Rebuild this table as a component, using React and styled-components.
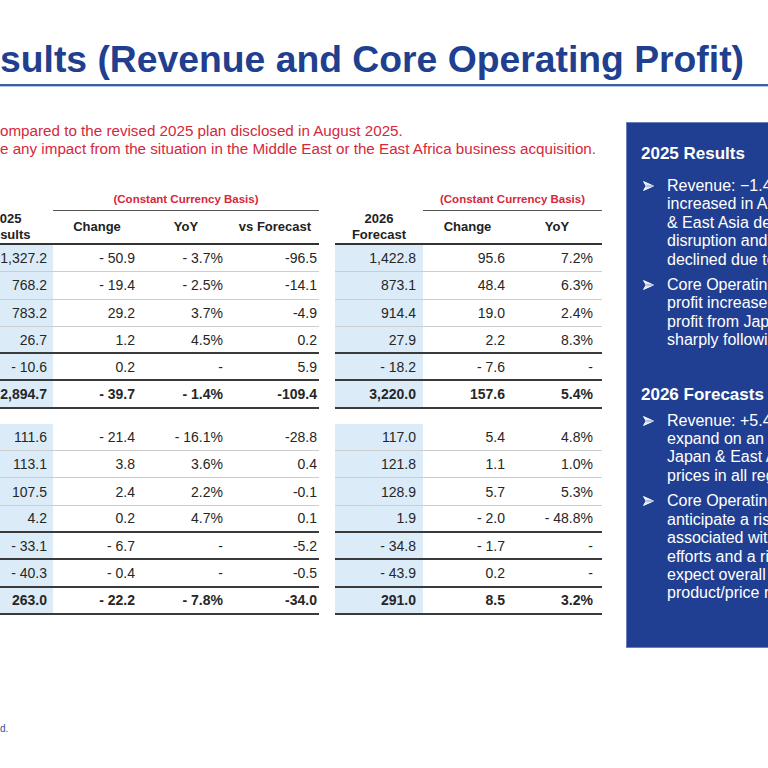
import React from 'react'
import styled, { createGlobalStyle } from 'styled-components'

const GlobalStyle = createGlobalStyle`
    html, body {
        margin: 0;
        padding: 0;
        background: #ffffff;
        overflow: hidden;
    }
    body {
        font-family: "Liberation Sans", Arial, sans-serif;
        color: #222222;
    }
`

const Page = styled.div`
    width: 768px;
    height: 768px;
    overflow: hidden;
    display: flex;
    flex-direction: column;
`

const Title = styled.h1`
    margin: 38px 0 0 0;
    font-size: 37.3px;
    line-height: 42px;
    font-weight: bold;
    color: #203f8f;
    white-space: nowrap;
`

const Rule = styled.div`
    margin-top: 4px;
    height: 2px;
    background: #3d5fa6;
    border-bottom: 1px solid #b4c3e0;
`

const Body = styled.div`
    display: flex;
    flex-direction: row;
    margin-top: 35px;
`

const LeftColumn = styled.div`
    flex: 0 0 626px;
    display: flex;
    flex-direction: column;
`

const Note = styled.div`
    font-size: 15.2px;
    line-height: 18px;
    color: #d5283b;
    white-space: nowrap;
`

const Tables = styled.div`
    display: flex;
    flex-direction: row;
    gap: 16px;
    margin-top: 31px;
    margin-left: ${props => props.offset}px;
`

const Block = styled.div`
    display: flex;
    flex-direction: column;
`

const CaptionRow = styled.div`
    display: flex;
    height: 22px;
    box-sizing: border-box;
`

const Caption = styled.div`
    flex: 1;
    text-align: center;
    font-size: 11.5px;
    line-height: 20px;
    font-weight: bold;
    color: #d5283b;
    border-bottom: 1.5px solid #555555;
`

const HeadRow = styled.div`
    display: flex;
    height: 34px;
    box-sizing: border-box;
    border-bottom: 2px solid #333333;
`

const HeadCell = styled.div`
    width: ${props => props.width}px;
    display: flex;
    align-items: center;
    justify-content: center;
    text-align: center;
    font-size: 13px;
    line-height: 16px;
    font-weight: bold;
    color: #222222;
`

const Row = styled.div`
    display: flex;
    height: 27.3px;
    box-sizing: border-box;
    border-bottom: ${props => props.line === 'dark' ? '2px solid #3a3a3a' : '1.5px solid #cdcdcd'};
`

const Cell = styled.div`
    width: ${props => props.width}px;
    box-sizing: border-box;
    padding-right: ${props => props.pad}px;
    display: flex;
    align-items: center;
    justify-content: flex-end;
    font-size: 14px;
    font-weight: ${props => props.bold ? 'bold' : 'normal'};
    color: #262626;
    background: ${props => props.shaded ? '#dbecf8' : 'transparent'};
    white-space: nowrap;
`

const Gap = styled.div`
    height: 15px;
`

const Panel = styled.div`
    flex: 0 0 260px;
    height: 526px;
    box-sizing: border-box;
    background: #213f92;
    border: 1px solid #6a80bd;
    padding: 20px 0 0 14px;
    color: #ffffff;
`

const PanelHeading = styled.div`
    font-size: 17px;
    line-height: 22px;
    font-weight: bold;
    white-space: nowrap;
    margin-top: ${props => props.top}px;
`

const BulletList = styled.div`
    display: flex;
    flex-direction: column;
    gap: 7px;
    margin-top: ${props => props.top}px;
`

const Bullet = styled.div`
    display: flex;
    flex-direction: row;
`

const Marker = styled.span`
    flex: 0 0 26px;
    height: 18.4px;
    display: flex;
    align-items: center;
    padding-left: 2px;
    box-sizing: border-box;
`

const BulletText = styled.div`
    font-size: 16px;
    line-height: 18.4px;
`

const Line = styled.div`
    white-space: nowrap;
`

const Footer = styled.div`
    margin-top: auto;
    padding-bottom: 33px;
    font-size: 10px;
    line-height: 12px;
    color: #3a4f96;
`

const Arrowhead = () => (
    <svg width="11" height="10" viewBox="0 0 11 10">
        <path d="M0.6 0.6 L10.4 5 L0.6 9.4 L3.2 5 Z" fill="#dfe5f3" stroke="#ffffff" strokeWidth="1" strokeLinejoin="round" />
        <path d="M3.2 5 L10.4 5" stroke="#8a9ccb" strokeWidth="1" />
    </svg>
)

const leftCols = [
    { width: 92, pad: 6 },
    { width: 88, pad: 6 },
    { width: 90, pad: 8 },
    { width: 88, pad: 2 },
]

const rightCols = [
    { width: 88, pad: 7 },
    { width: 89, pad: 7 },
    { width: 90, pad: 9 },
]

const leftTable = {
    head: [['2025', 'Results'], ['Change'], ['YoY'], ['vs Forecast']],
    blocks: [
        [
            { cells: ['1,327.2', '- 50.9', '- 3.7%', '-96.5'] },
            { cells: ['768.2', '- 19.4', '- 2.5%', '-14.1'] },
            { cells: ['783.2', '29.2', '3.7%', '-4.9'] },
            { cells: ['26.7', '1.2', '4.5%', '0.2'], line: 'dark' },
            { cells: ['- 10.6', '0.2', '-', '5.9'], line: 'dark' },
            { cells: ['2,894.7', '- 39.7', '- 1.4%', '-109.4'], line: 'dark', bold: true },
        ],
        [
            { cells: ['111.6', '- 21.4', '- 16.1%', '-28.8'] },
            { cells: ['113.1', '3.8', '3.6%', '0.4'] },
            { cells: ['107.5', '2.4', '2.2%', '-0.1'] },
            { cells: ['4.2', '0.2', '4.7%', '0.1'], line: 'dark' },
            { cells: ['- 33.1', '- 6.7', '-', '-5.2'], line: 'dark' },
            { cells: ['- 40.3', '- 0.4', '-', '-0.5'], line: 'dark' },
            { cells: ['263.0', '- 22.2', '- 7.8%', '-34.0'], line: 'dark', bold: true },
        ],
    ],
}

const rightTable = {
    head: [['2026', 'Forecast'], ['Change'], ['YoY']],
    blocks: [
        [
            { cells: ['1,422.8', '95.6', '7.2%'] },
            { cells: ['873.1', '48.4', '6.3%'] },
            { cells: ['914.4', '19.0', '2.4%'] },
            { cells: ['27.9', '2.2', '8.3%'], line: 'dark' },
            { cells: ['- 18.2', '- 7.6', '-'], line: 'dark' },
            { cells: ['3,220.0', '157.6', '5.4%'], line: 'dark', bold: true },
        ],
        [
            { cells: ['117.0', '5.4', '4.8%'] },
            { cells: ['121.8', '1.1', '1.0%'] },
            { cells: ['128.9', '5.7', '5.3%'] },
            { cells: ['1.9', '- 2.0', '- 48.8%'], line: 'dark' },
            { cells: ['- 34.8', '- 1.7', '-'], line: 'dark' },
            { cells: ['- 43.9', '0.2', '-'], line: 'dark' },
            { cells: ['291.0', '8.5', '3.2%'], line: 'dark', bold: true },
        ],
    ],
}

function DataTable({ table, cols }) {
    return (
        <Block>
            <CaptionRow>
                <div style={{ width: cols[0].width }} />
                <Caption>(Constant Currency Basis)</Caption>
            </CaptionRow>
            <HeadRow>
                {table.head.map((lines, i) => (
                    <HeadCell key={i} width={cols[i].width}>
                        <div>{lines.map((l, j) => <div key={j}>{l}</div>)}</div>
                    </HeadCell>
                ))}
            </HeadRow>
            {table.blocks.map((rows, b) => (
                <React.Fragment key={b}>
                    {b > 0 && <Gap />}
                    {rows.map((row, r) => (
                        <Row key={r} line={row.line}>
                            {row.cells.map((v, c) => (
                                <Cell key={c} width={cols[c].width} pad={cols[c].pad} shaded={c === 0} bold={row.bold}>
                                    {v}
                                </Cell>
                            ))}
                        </Row>
                    ))}
                </React.Fragment>
            ))}
        </Block>
    )
}

const panelSections = [
    {
        heading: '2025 Results',
        headingTop: 0,
        listTop: 12,
        bullets: [
            [
                'Revenue: −1.4% YoY. Revenue',
                'increased in Americas, while Japan',
                '& East Asia declined due to supply',
                'disruption and EMEA revenue',
                'declined due to lower volumes.',
            ],
            [
                'Core Operating Profit: −7.8% YoY,',
                'profit increased in Americas, while',
                'profit from Japan & East Asia fell',
                'sharply following the disruption.',
            ],
        ],
    },
    {
        heading: '2026 Forecasts',
        headingTop: 34,
        listTop: 6,
        bullets: [
            [
                'Revenue: +5.4% YoY. We expect to',
                'expand on an increase in volume in',
                'Japan & East Asia and higher',
                'prices in all regions.',
            ],
            [
                'Core Operating Profit: +3.2% YoY. We',
                'anticipate a rise in costs',
                'associated with growth investment',
                'efforts and a rise in raw materials, but',
                'expect overall profit growth from',
                'product/price mix improvements.',
            ],
        ],
    },
]

function SidePanel() {
    return (
        <Panel>
            {panelSections.map((section, s) => (
                <React.Fragment key={s}>
                    <PanelHeading top={section.headingTop}>{section.heading}</PanelHeading>
                    <BulletList top={section.listTop}>
                        {section.bullets.map((lines, b) => (
                            <Bullet key={b}>
                                <Marker><Arrowhead /></Marker>
                                <BulletText>
                                    {lines.map((l, i) => <Line key={i}>{l}</Line>)}
                                </BulletText>
                            </Bullet>
                        ))}
                    </BulletList>
                </React.Fragment>
            ))}
        </Panel>
    )
}

export default function App() {
    return (
        <Page>
            <GlobalStyle />
            <Title>sults (Revenue and Core Operating Profit)</Title>
            <Rule />
            <Body>
                <LeftColumn>
                    <Note>ompared to the revised 2025 plan disclosed in August 2025.</Note>
                    <Note>e any impact from the situation in the Middle East or the East Africa business acquisition.</Note>
                    <Tables offset={-39}>
                        <DataTable table={leftTable} cols={leftCols} />
                        <DataTable table={rightTable} cols={rightCols} />
                    </Tables>
                </LeftColumn>
                <SidePanel />
            </Body>
            <Footer>d.</Footer>
        </Page>
    )
}
